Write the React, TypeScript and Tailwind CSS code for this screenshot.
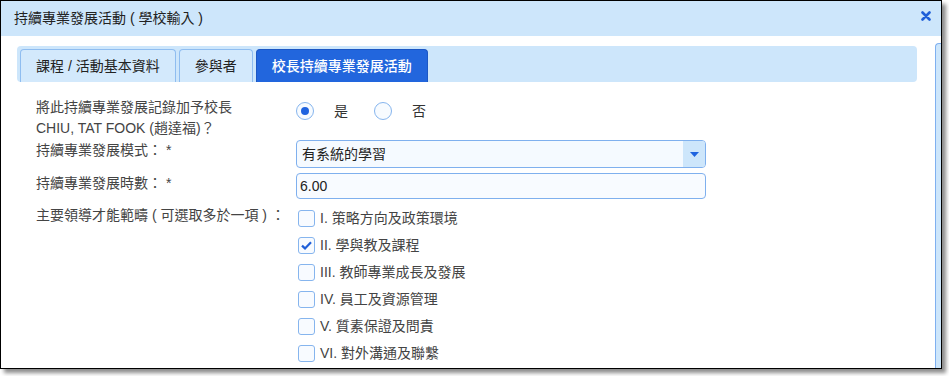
import { useState } from "react";

const font = {
  fontFamily: '"Liberation Sans", "Noto Sans CJK TC", sans-serif',
};

const tabs = [
  { label: "課程 / 活動基本資料" },
  { label: "參與者" },
  { label: "校長持續專業發展活動", active: true },
];

const domains = [
  { label: "I. 策略方向及政策環境", checked: false },
  { label: "II. 學與教及課程", checked: true },
  { label: "III. 教師專業成長及發展", checked: false },
  { label: "IV. 員工及資源管理", checked: false },
  { label: "V. 質素保證及問責", checked: false },
  { label: "VI. 對外溝通及聯繫", checked: false },
];

function Radio({ checked, label }: { checked: boolean; label: string }) {
  return (
    <div className="flex items-center">
      <span className="w-[18px] h-[18px] rounded-full border border-[#86b5ee] bg-[#f7fbff] flex items-center justify-center">
        {checked && <span className="w-[8px] h-[8px] rounded-full bg-[#1f63df]" />}
      </span>
      <span className="ml-[20px] text-[14px] text-[#333] leading-[18px]">{label}</span>
    </div>
  );
}

function Checkbox({ checked, label }: { checked: boolean; label: string }) {
  return (
    <div className="flex items-center h-[27px]">
      <span className="ml-[2px] w-[17px] h-[17px] rounded-[3px] border border-[#86b5ee] bg-[#f8fbff] flex items-center justify-center">
        {checked && (
          <svg width="11" height="9" viewBox="0 0 11 9">
            <path d="M1 4.6 L4 7.4 L10 1.2" fill="none" stroke="#1f5fd8" strokeWidth="2.2" />
          </svg>
        )}
      </span>
      <span className="ml-[5px] text-[14px] text-[#444] leading-[21px]">{label}</span>
    </div>
  );
}

export default function App() {
  const [yes] = useState(true);

  return (
    <div className="w-[949px] h-[376px] bg-white" style={font}>
      <div className="w-[942px] h-[369px] border border-black bg-white shadow-[4px_4px_4px_rgba(0,0,0,0.45)] flex flex-col overflow-hidden">
        {/* Title bar */}
        <div className="h-[35px] shrink-0 bg-[#cde6fb] flex items-center justify-between pl-[13px] pr-[10px]">
          <span className="text-[14px] text-[#222]">持續專業發展活動 ( 學校輸入 )</span>
          <svg width="10" height="10" viewBox="0 0 10 10" className="mb-[6px]">
            <path d="M1.5 1.5 L8.5 8.5 M8.5 1.5 L1.5 8.5" stroke="#1f5fd8" strokeWidth="2.6" strokeLinecap="round" />
          </svg>
        </div>

        <div className="flex flex-1 min-h-0">
          <div className="flex-1 min-w-0">
            {/* Tabs */}
            <div className="mt-[10px] ml-[16px] w-[900px] h-[36px] rounded-[4px] bg-[#cde6fb] pl-[3px] pt-[3px] flex gap-[3px]">
              {tabs.map((t) =>
                t.active ? (
                  <div
                    key={t.label}
                    className="h-[33px] px-[15px] rounded-t-[4px] bg-[#2266dd] border border-[#1c57c4] border-b-0 flex items-center text-[14px] text-white font-medium"
                  >
                    {t.label}
                  </div>
                ) : (
                  <div
                    key={t.label}
                    className="h-[33px] px-[15px] rounded-t-[4px] bg-[#d3e9fc] border border-[#8fbdf0] border-b-0 flex items-center text-[14px] text-[#222]"
                  >
                    {t.label}
                  </div>
                )
              )}
            </div>

            {/* Form */}
            <div className="mt-[15px] pl-[35px] text-[14px] text-[#444] leading-[21px]">
              <div className="flex h-[42px]">
                <div className="w-[260px]">
                  將此持續專業發展記錄加予校長
                  <br />
                  CHIU, TAT FOOK (趙達福)？
                </div>
                <div className="flex gap-[26px] mt-[5px] h-[18px]">
                  <Radio checked={yes} label="是" />
                  <Radio checked={!yes} label="否" />
                </div>
              </div>

              <div className="flex mt-[1px]">
                <div className="w-[260px]">持續專業發展模式： *</div>
                <div className="w-[410px] h-[28px] rounded-[4px] border border-[#7fb0ee] bg-[#f5faff] flex overflow-hidden">
                  <div className="flex-1 pl-[5px] flex items-center text-[#222]">有系統的學習</div>
                  <div className="w-[22px] bg-[#cde6fb] flex items-center justify-center">
                    <svg width="9" height="5" viewBox="0 0 9 5">
                      <path d="M0 0 L9 0 L4.5 5 Z" fill="#1f63df" />
                    </svg>
                  </div>
                </div>
              </div>

              <div className="flex mt-[5px]">
                <div className="w-[260px]">持續專業發展時數： *</div>
                <div className="w-[410px] h-[26px] rounded-[4px] border border-[#7fb0ee] bg-[#f8fbff] pl-[3px] flex items-center text-[#222]">
                  6.00
                </div>
              </div>

              <div className="flex mt-[6px]">
                <div className="w-[260px]">主要領導才能範疇 ( 可選取多於一項 ) ：</div>
                <div className="flex flex-col">
                  {domains.map((d) => (
                    <Checkbox key={d.label} checked={d.checked} label={d.label} />
                  ))}
                </div>
              </div>
            </div>
          </div>

          {/* Scrollbar */}
          <div className="w-[6px] shrink-0 pt-[7px]">
            <div className="h-full rounded-tl-[4px] border-l border-t border-[#7fb0f0] bg-[#cde6fb]" />
          </div>
        </div>
      </div>
    </div>
  );
}
